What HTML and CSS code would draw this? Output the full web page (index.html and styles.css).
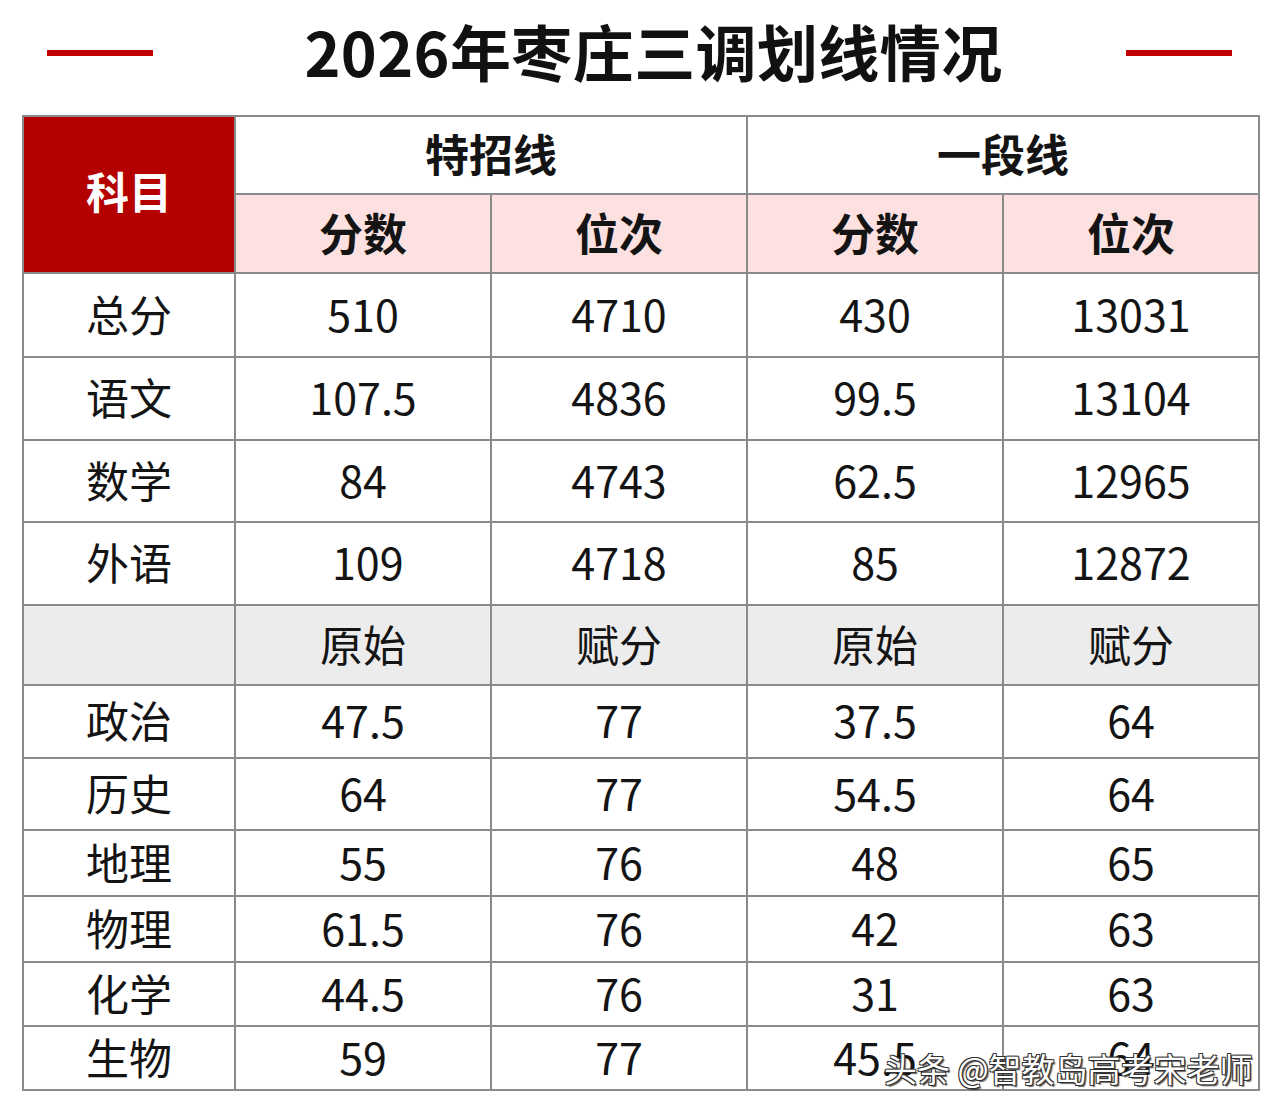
FILE: index.html
```html
<!DOCTYPE html>
<html lang="zh-CN">
<head>
<meta charset="utf-8">
<title>2026年枣庄三调划线情况</title>
<link rel="stylesheet" href="styles.css">
</head>
<body>
<div class="page">
  <header class="title-bar">
    <span class="rule"></span>
    <h1 class="title">2026年枣庄三调划线情况</h1>
    <span class="rule"></span>
  </header>
  <div class="table-wrap">
    <table class="scores">
      <colgroup>
        <col class="c-subj"><col class="c-val"><col class="c-val"><col class="c-val"><col class="c-val">
      </colgroup>
      <thead>
        <tr class="h1">
          <th class="subj-head" rowspan="2">科目</th>
          <th colspan="2" class="group">特招线</th>
          <th colspan="2" class="group">一段线</th>
        </tr>
        <tr class="h2">
          <th class="pink">分数</th><th class="pink">位次</th><th class="pink">分数</th><th class="pink">位次</th>
        </tr>
      </thead>
      <tbody>
        <tr class="r-a"><td>总分</td><td>510</td><td>4710</td><td>430</td><td>13031</td></tr>
        <tr class="r-b"><td>语文</td><td>107.5</td><td>4836</td><td>99.5</td><td>13104</td></tr>
        <tr class="r-c"><td>数学</td><td>84</td><td>4743</td><td>62.5</td><td>12965</td></tr>
        <tr class="r-d"><td>外语</td><td>&nbsp;109</td><td>4718</td><td>85</td><td>12872</td></tr>
        <tr class="r-gray"><td></td><td>原始</td><td>赋分</td><td>原始</td><td>赋分</td></tr>
        <tr class="r-e"><td>政治</td><td>47.5</td><td>77</td><td>37.5</td><td>64</td></tr>
        <tr class="r-f"><td>历史</td><td>64</td><td>77</td><td>54.5</td><td>64</td></tr>
        <tr class="r-g"><td>地理</td><td>55</td><td>76</td><td>48</td><td>65</td></tr>
        <tr class="r-g"><td>物理</td><td>61.5</td><td>76</td><td>42</td><td>63</td></tr>
        <tr class="r-h"><td>化学</td><td>44.5</td><td>76</td><td>31</td><td>63</td></tr>
        <tr class="r-h"><td>生物</td><td>59</td><td>77</td><td>45.5</td><td>64</td></tr>
      </tbody>
    </table>
    <div class="watermark">头条 @智教岛高考宋老师</div>
  </div>
</div>
</body>
</html>
```

FILE: styles.css
```css
html, body {
  margin: 0;
  padding: 0;
  background: #ffffff;
}
body {
  font-family: "Noto Sans CJK SC", "Noto Sans", sans-serif;
  color: #111;
}
.page {
  width: 1280px;
  height: 1113px;
  position: relative;
}
.title-bar {
  height: 115px;
  box-sizing: border-box;
  padding: 0 48px 14px 47px;
  display: flex;
  align-items: center;
  justify-content: space-between;
}
.rule {
  display: block;
  width: 106px;
  height: 6px;
  background: #c00000;
  margin-top: 4px;
}
.title {
  margin: 0 0 0 28px;
  font-size: 61px;
  font-weight: 700;
  letter-spacing: 0.4px;
  color: #111;
  line-height: 1;
}
.table-wrap {
  position: relative;
  margin-left: 22px;
  width: 1235px;
}
.scores {
  border-collapse: collapse;
  table-layout: fixed;
  width: 1235px;
}
.c-subj { width: 212px; }
.c-val { width: 256px; }
.scores th, .scores td {
  border: 2px solid #8a8a8a;
  text-align: center;
  vertical-align: middle;
  padding: 0 0 4px 0;
  font-size: 43px;
  line-height: 1;
  color: #141414;
}
.scores th {
  font-weight: 700;
  font-size: 44px;
}
.scores td {
  font-weight: 400;
}
.subj-head {
  background: #b50000;
  color: #ffffff !important;
  font-size: 43px !important;
  padding-bottom: 8px !important;
}
.group { background: #fff; }
.pink { background: #fde1e1; }
.h1 { height: 78px; }
.h2 { height: 79px; }
.r-a { height: 84px; }
.r-b { height: 83px; }
.r-c { height: 82px; }
.r-d { height: 83px; }
.r-gray { height: 80px; }
.r-gray td { background: #ececec; }
.r-e { height: 73px; }
.r-f { height: 72px; }
.r-g { height: 66px; }
.r-h { height: 64px; }
.watermark {
  position: absolute;
  left: 862px;
  bottom: 6px;
  font-size: 33px;
  line-height: 1;
  color: #ffffff;
  white-space: nowrap;
  text-shadow: 1px 1px 0 #333, -1px -1px 0 #333, 1px -1px 0 #333, -1px 1px 0 #333, 2px 2px 1px rgba(0,0,0,0.6);
}
```
